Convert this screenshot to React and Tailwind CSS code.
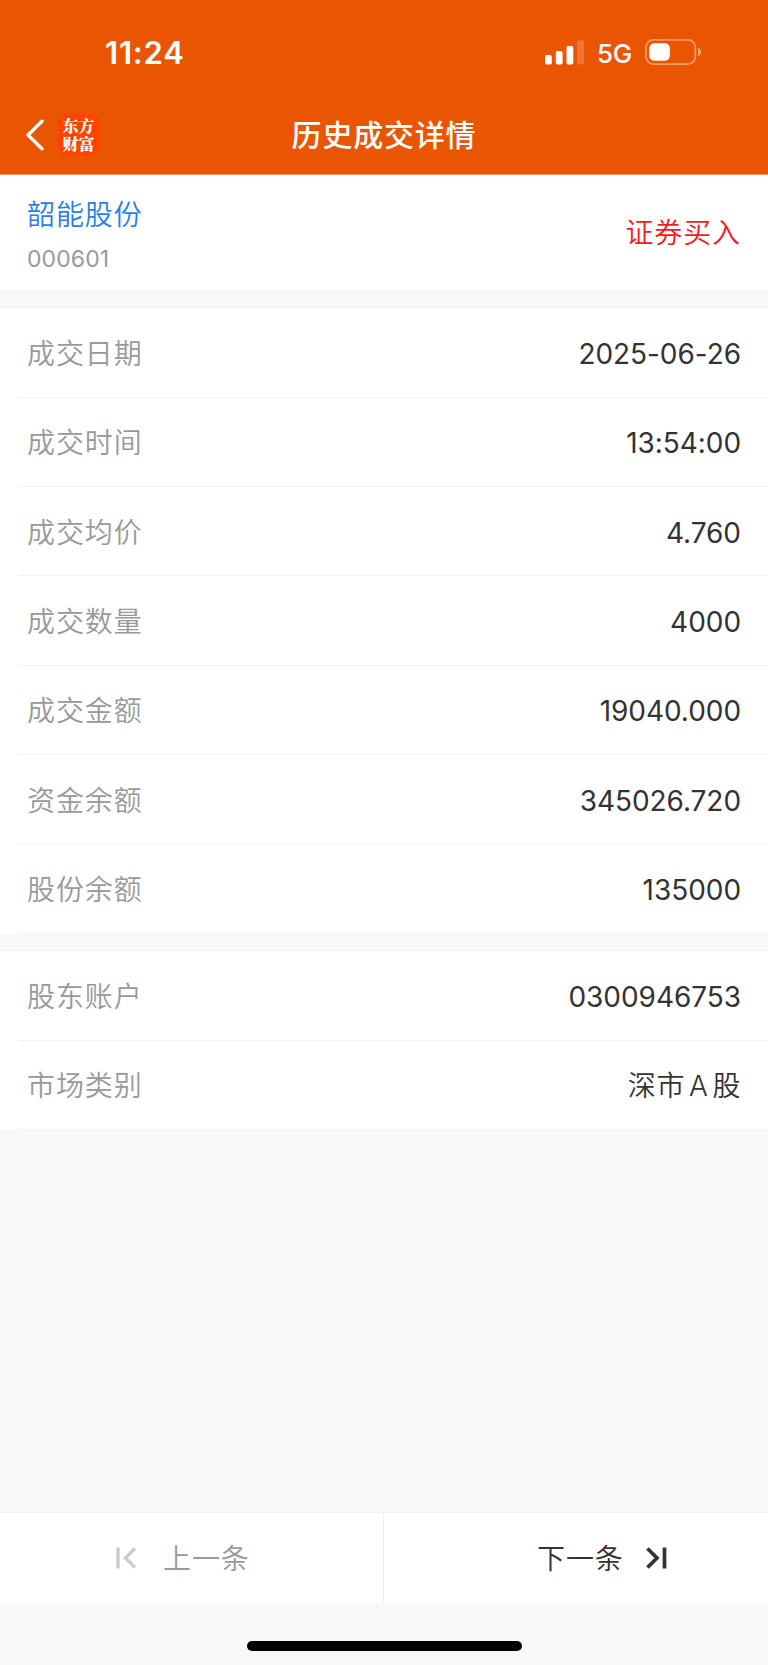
const tradeRows = [
  { label: '成交日期', value: '2025-06-26' },
  { label: '成交时间', value: '13:54:00' },
  { label: '成交均价', value: '4.760' },
  { label: '成交数量', value: '4000' },
  { label: '成交金额', value: '19040.000' },
  { label: '资金余额', value: '345026.720' },
  { label: '股份余额', value: '135000' },
]

const accountRows = [
  { label: '股东账户', value: '0300946753' },
  { label: '市场类别', value: '深市 A 股', cjk: true },
]

function StatusBar() {
  return (
    <div className="flex h-[104px] items-center justify-between pl-[105px] pr-[67px]">
      <span className="text-[31px] leading-none font-semibold tracking-[0.8px]">11:24</span>
      <div className="flex items-center">
        <svg width="39" height="25" viewBox="0 0 39 25" fill="currentColor">
          <rect x="0" y="15" width="6.8" height="9.6" rx="1.8" />
          <rect x="10.8" y="11" width="6.8" height="13.6" rx="1.8" />
          <rect x="21.5" y="6" width="6.8" height="18.6" rx="1.8" />
          <rect x="32.2" y="0.3" width="6.8" height="24.3" rx="1.8" opacity="0.2" />
        </svg>
        <span className="ml-[13px] w-[36px] pt-[3px] text-[26px] leading-none font-medium tracking-[-0.3px]">5G</span>
        <svg className="ml-3" width="56" height="26" viewBox="0 0 56 26" fill="none">
          <rect x="0.9" y="0.9" width="49.4" height="24.2" rx="7.5" stroke="white" strokeOpacity="0.4" strokeWidth="1.8" />
          <rect x="4.3" y="4.2" width="20.6" height="17.6" rx="5" fill="white" />
          <path d="M53 8.6C55 9.6 56 11 56 13s-1 3.4-3 4.4z" fill="white" fillOpacity="0.45" />
        </svg>
      </div>
    </div>
  )
}

function NavBar() {
  return (
    <div className="grid h-[62px] grid-cols-[1fr_auto_1fr] items-center">
      <div className="flex items-center pl-[26px]">
        <svg width="18" height="32" viewBox="0 0 18 32" fill="none" stroke="currentColor" strokeWidth="3.3" strokeLinecap="round" strokeLinejoin="round">
          <path d="M16 2.2L2 16l14 13.8" />
        </svg>
        <div className="ml-[13.5px] h-[42px] w-[42px] rounded-[9px] bg-[#ff4300] pt-[3px] text-center font-['Noto_Serif_CJK_SC','Noto_Sans_CJK_SC',serif] text-[16px] leading-[17.5px] font-black">
          东方
          <br />
          财富
        </div>
      </div>
      <h1 className="text-[30px] leading-none font-medium tracking-[0.8px]">历史成交详情</h1>
      <span />
    </div>
  )
}

function DetailRow({ label, value, cjk }) {
  return (
    <div className="ml-[18px] flex h-[89.33px] items-center justify-between border-b border-[#f2f3f4] pt-[3px] pl-[9px] pr-[27px] text-[28px] leading-none">
      <span className="font-[350] tracking-[0.9px] text-[#999]">{label}</span>
      <span className={cjk ? 'font-[350] tracking-[0.6px] text-[#333] [word-spacing:-4.5px]' : 'tracking-[-0.05px] text-[#333]'}>{value}</span>
    </div>
  )
}

function DetailGroup({ rows }) {
  return (
    <section className="bg-white">
      {rows.map((row) => (
        <DetailRow key={row.label} {...row} />
      ))}
    </section>
  )
}

export default function App() {
  return (
    <div className="flex h-[1665px] w-[768px] flex-col bg-[#f6f8fa] font-['Inter','Noto_Sans_CJK_SC',sans-serif]">
      <header className="h-[174px] bg-[#ea5504] text-white">
        <StatusBar />
        <NavBar />
      </header>

      <section className="flex h-[116px] items-center justify-between border-t border-[#f09a68] bg-white pl-[27px] pr-[27px]">
        <div className="flex flex-col pt-[4px]">
          <span className="text-[28px] leading-[40px] font-[350] tracking-[0.9px] text-[#2b7de9]">韶能股份</span>
          <span className="mt-[8px] text-[23px] leading-[32px] tracking-[0.1px] text-[#999]">000601</span>
        </div>
        <span className="text-[28px] leading-none font-[350] tracking-[0.9px] text-[#f8191e]">证券买入</span>
      </section>

      <div className="h-[18.4px] border-b border-[#f0f1f2]" />
      <DetailGroup rows={tradeRows} />
      <div className="h-[17.8px] border-b border-[#f0f1f2]" />
      <DetailGroup rows={accountRows} />

      <footer className="mt-auto">
        <div className="grid h-[91px] grid-cols-2 border-t border-[#eff0f1] bg-white text-[28px] leading-none font-[350] tracking-[0.9px]">
          <button className="flex items-center border-r border-[#eceeef] pl-[116px] text-[#999]">
            <svg width="21" height="22" viewBox="0 0 21 22" fill="none" stroke="#ccc" strokeWidth="3.4">
              <path d="M2 0.5v21M19 1.5L9.5 11l9.5 9.5" />
            </svg>
            <span className="ml-[26px] pt-[2px]">上一条</span>
          </button>
          <button className="flex items-center pl-[153px] text-[#333]">
            <span className="pt-[2px]">下一条</span>
            <svg className="ml-[22px]" width="21" height="22" viewBox="0 0 21 22" fill="none" stroke="currentColor" strokeWidth="3.7">
              <path d="M18.5 0.5v21M1.5 1.5L11 11l-9.5 9.5" />
            </svg>
          </button>
        </div>
        <div className="flex h-[62px] justify-center pt-[38px]">
          <div className="h-[9.5px] w-[275px] rounded-full bg-black" />
        </div>
      </footer>
    </div>
  )
}
